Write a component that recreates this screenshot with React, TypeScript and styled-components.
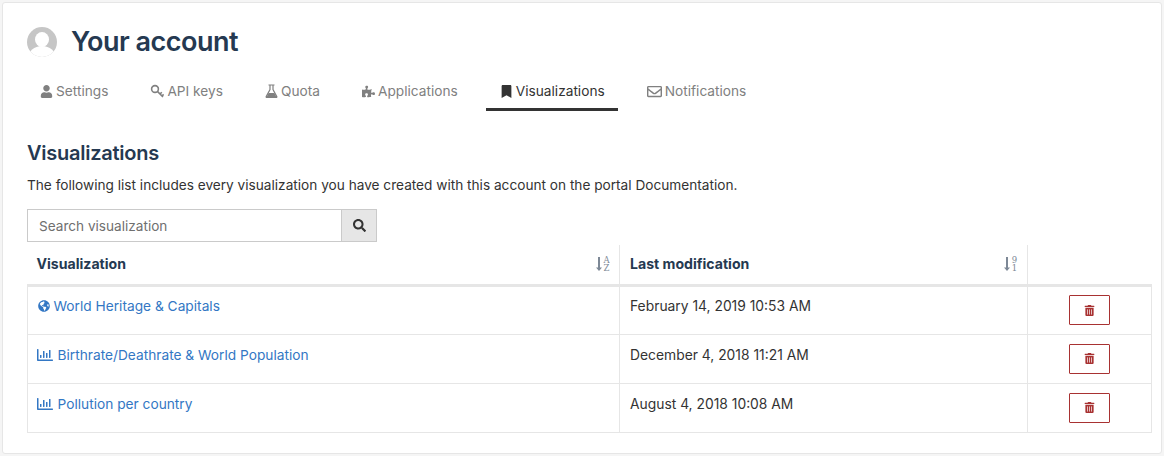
import React from "react";
import styled, { createGlobalStyle } from "styled-components";
import {
  FaUser, FaPuzzlePiece, FaBookmark, FaRegEnvelope, FaSearch,
  FaGlobeAmericas, FaRegChartBar, FaTrashAlt,
} from "react-icons/fa";

const Global = createGlobalStyle`
  html, body { margin: 0; padding: 0; background: #f5f5f5; }
  body { font-family: Inter, "Liberation Sans", sans-serif; width: 1164px; height: 456px; overflow: hidden; }
  * { box-sizing: border-box; }
`;

const Page = styled.div`
  padding: 2px;
  height: 456px;
`;
const Card = styled.main`
  height: 452px;
  background: #fff;
  border: 1px solid #e6e6e6;
  border-radius: 3px;
  padding: 24px 9px 0 24px;
`;
const Header = styled.header`
  display: flex;
  align-items: center;
  height: 30px;
`;
const Avatar = styled.div`
  width: 30px;
  height: 30px;
  border-radius: 50%;
  background: #c6c6c6;
  position: relative;
  overflow: hidden;
  &::before {
    content: "";
    position: absolute;
    left: 8px;
    top: 5px;
    width: 14px;
    height: 15px;
    border-radius: 50%;
    background: #fff;
  }
  &::after {
    content: "";
    position: absolute;
    left: 1px;
    top: 19px;
    width: 28px;
    height: 24px;
    border-radius: 50%;
    background: #fff;
  }
`;
const Title = styled.h1`
  margin: 0 0 0 14px;
  font-size: 27px;
  line-height: 30px;
  font-weight: 600;
  letter-spacing: -0.5px;
  color: #253951;
`;
const Tabs = styled.nav`
  display: flex;
  gap: 15px;
  margin: 15px 0 0 -0.5px;
  height: 39px;
`;
const Tab = styled.a<{ $active?: boolean }>`
  height: 39px;
  display: flex;
  align-items: center;
  gap: 3px;
  padding: 2px 13.5px 0;
  font-size: 13.7px;
  color: ${(p) => (p.$active ? "#333" : "#808080")};
  border-bottom: 3px solid ${(p) => (p.$active ? "#333" : "transparent")};
  svg { flex: none; }
`;
const SectionTitle = styled.h2`
  margin: 30px 0 0;
  font-size: 20px;
  line-height: 24px;
  font-weight: 600;
  letter-spacing: -0.25px;
  color: #253951;
`;
const Lead = styled.p`
  margin: 11px 0 0;
  font-size: 13.65px;
  line-height: 18px;
  color: #333;
`;
const Search = styled.div`
  display: flex;
  width: 350px;
  height: 33px;
  margin-top: 15px;
  border: 1px solid #cacaca;
`;
const SearchInput = styled.div`
  flex: 1;
  padding-left: 11px;
  font-size: 13.6px;
  line-height: 33px;
  color: #6f6f6f;
`;
const SearchButton = styled.div`
  width: 35px;
  background: #e6e6e6;
  border-left: 1px solid #cacaca;
  display: flex;
  align-items: center;
  justify-content: center;
  color: #333;
  font-size: 13px;
`;
const Table = styled.table`
  border-collapse: collapse;
  table-layout: fixed;
  width: 1124px;
  margin-top: 3px;
`;
const HeadCell = styled.th<{ $w: number }>`
  width: ${(p) => p.$w}px;
  height: 40px;
  padding: 0 9px 2px 10px;
  text-align: left;
  font-size: 14.1px;
  font-weight: 700;
  color: #253951;
  border-left: 1px solid #e6e6e6;
  border-right: 1px solid #e6e6e6;
  border-bottom: 3px solid #e6e6e6;
  &:first-child { border-left: none; padding-left: 9px; }
  &:last-child { border-right: none; }
`;
const HeadInner = styled.div`
  display: flex;
  align-items: center;
  justify-content: space-between;
`;
const SortSvg = styled.svg`
  flex: none;
  color: #7d8896;
  margin-top: 1px;
`;
const SortLabel = styled.text`
  font-family: "DejaVu Serif", "Liberation Serif", serif;
  font-size: 8.5px;
  font-weight: 400;
  fill: currentColor;
  text-anchor: middle;
`;
const Cell = styled.td`
  height: 49px;
  padding: 0 10px 8px;
  vertical-align: middle;
  font-size: 13.85px;
  color: #333;
  border: 1px solid #e6e6e6;
`;
const ActionCell = styled(Cell)`
  padding: 0;
  text-align: center;
`;
const LinkText = styled.a`
  display: flex;
  align-items: center;
  height: 18px;
  gap: 3.5px;
  font-size: 13.72px;
  color: #3377c4;
  svg { font-size: 12px; flex: none; }
`;
const ChartIcon = styled.span`
  display: inline-flex;
  margin: 0 1px 0 -1px;
  svg { font-size: 16px; }
`;
const DeleteButton = styled.button`
  width: 41px;
  height: 30px;
  padding: 0;
  border: 1px solid #a83232;
  border-radius: 1px;
  background: #fff;
  color: #a83232;
  font-size: 11px;
  display: inline-flex;
  align-items: center;
  justify-content: center;
`;

const KeyIcon = () => (
  <svg width="14" height="14" viewBox="0 0 14 14" fill="none" stroke="currentColor" strokeWidth="1.6">
    <circle cx="5" cy="5" r="3.4" />
    <path d="M7.4 7.4L13 13M10 10l1.8-1.8M12 12l1.6-1.6" />
  </svg>
);
const FlaskIcon = () => (
  <svg width="13" height="14" viewBox="0 0 13 14" fill="none" stroke="currentColor" strokeWidth="1.2">
    <path d="M3.5 1h6M5 1v4.5L1.2 12.6c-.2.4 0 .8.5.8h9.6c.5 0 .7-.4.5-.8L8 5.5V1" />
    <path d="M3.6 9h5.8l2 4H1.6z" fill="currentColor" stroke="none" />
  </svg>
);
const SortIcon = ({ top, bottom }: { top: string; bottom: string }) => (
  <SortSvg width="14" height="16" viewBox="0 0 14 16">
    <path d="M3 1v12" stroke="currentColor" strokeWidth="2" />
    <path d="M0 11.5h6L3 15z" fill="currentColor" />
    <SortLabel x="10.5" y="6.5">{top}</SortLabel>
    <SortLabel x="10.5" y="15">{bottom}</SortLabel>
  </SortSvg>
);

const tabs = [
  { label: "Settings", icon: <FaUser size={13} /> },
  { label: "API keys", icon: <KeyIcon /> },
  { label: "Quota", icon: <FlaskIcon /> },
  { label: "Applications", icon: <FaPuzzlePiece size={13} /> },
  { label: "Visualizations", icon: <FaBookmark size={13} />, active: true },
  { label: "Notifications", icon: <FaRegEnvelope size={15} /> },
];

const rows = [
  { name: "World Heritage & Capitals", date: "February 14, 2019 10:53 AM", globe: true },
  { name: "Birthrate/Deathrate & World Population", date: "December 4, 2018 11:21 AM" },
  { name: "Pollution per country", date: "August 4, 2018 10:08 AM" },
];

export default function App() {
  return (
    <Page>
      <Global />
      <Card>
        <Header>
          <Avatar />
          <Title>Your account</Title>
        </Header>
        <Tabs>
          {tabs.map((t) => (
            <Tab key={t.label} $active={t.active}>
              {t.icon}
              {t.label}
            </Tab>
          ))}
        </Tabs>
        <SectionTitle>Visualizations</SectionTitle>
        <Lead>The following list includes every visualization you have created with this account on the portal Documentation.</Lead>
        <Search>
          <SearchInput>Search visualization</SearchInput>
          <SearchButton><FaSearch /></SearchButton>
        </Search>
        <Table>
          <thead>
            <tr>
              <HeadCell $w={592}>
                <HeadInner>Visualization <SortIcon top="A" bottom="Z" /></HeadInner>
              </HeadCell>
              <HeadCell $w={408}>
                <HeadInner>Last modification <SortIcon top="9" bottom="1" /></HeadInner>
              </HeadCell>
              <HeadCell $w={124} />
            </tr>
          </thead>
          <tbody>
            {rows.map((r) => (
              <tr key={r.name}>
                <Cell>
                  <LinkText>
                    {r.globe ? <FaGlobeAmericas /> : <ChartIcon><FaRegChartBar /></ChartIcon>}
                    {r.name}
                  </LinkText>
                </Cell>
                <Cell>{r.date}</Cell>
                <ActionCell>
                  <DeleteButton aria-label="Delete"><FaTrashAlt /></DeleteButton>
                </ActionCell>
              </tr>
            ))}
          </tbody>
        </Table>
      </Card>
    </Page>
  );
}
